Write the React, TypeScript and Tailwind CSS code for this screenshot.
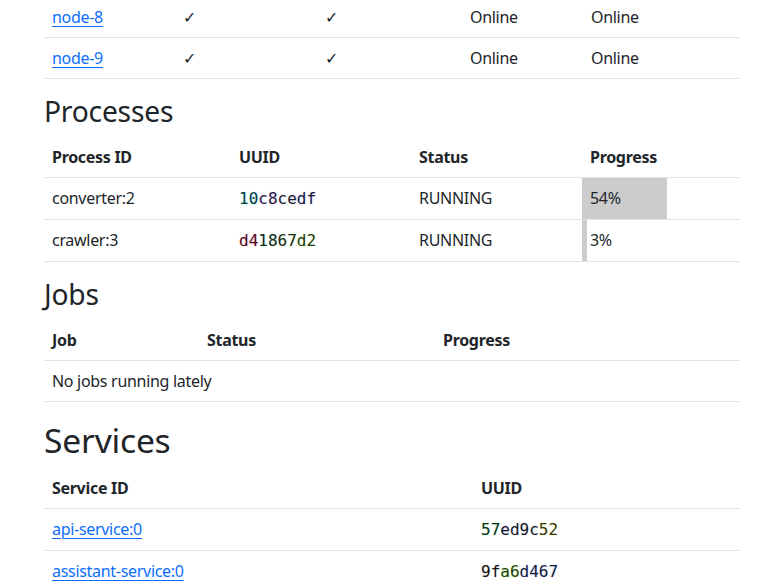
import React from "react";

const FONT = "font-['Noto_Sans',sans-serif]";
const MONO = "font-['DejaVu_Sans_Mono',monospace] tracking-normal";

type Seg = { t: string; c: string };

const uuids: Record<string, Seg[]> = {
  "10c8cedf": [
    { t: "10", c: "text-[#0a3a3c] [text-shadow:0_0_2px_#8ff5ff]" },
    { t: "c8", c: "text-[#2a1c3c] [text-shadow:0_0_2px_#dcc8ff]" },
    { t: "ce", c: "text-[#1c1c30] [text-shadow:0_0_2px_#d0d0e8]" },
    { t: "df", c: "text-[#16163a] [text-shadow:0_0_2px_#c8c8ff]" },
  ],
  d41867d2: [
    { t: "d4", c: "text-[#4a0f22] [text-shadow:0_0_2px_#ffb0c8]" },
    { t: "18", c: "text-[#10281a] [text-shadow:0_0_2px_#c8ecd4]" },
    { t: "67", c: "text-[#1a2a12] [text-shadow:0_0_2px_#d8f0c4]" },
    { t: "d2", c: "text-[#1e3a10] [text-shadow:0_0_2px_#ccffaa]" },
  ],
  "57ed9c52": [
    { t: "57", c: "text-[#0a3318] [text-shadow:0_0_2px_#b4f0c4]" },
    { t: "ed", c: "text-[#121a2a] [text-shadow:0_0_2px_#d0d4e4]" },
    { t: "9c", c: "text-[#121a2a] [text-shadow:0_0_2px_#d0d4e4]" },
    { t: "52", c: "text-[#33330f] [text-shadow:0_0_2px_#ffffa0]" },
  ],
  "9fa6d467": [
    { t: "9f", c: "text-[#121212] [text-shadow:0_0_2px_#dddddd]" },
    { t: "a6", c: "text-[#1f4010] [text-shadow:0_0_2px_#c4ff94]" },
    { t: "d4", c: "text-[#12203a] [text-shadow:0_0_2px_#c4d4ff]" },
    { t: "67", c: "text-[#12203a] [text-shadow:0_0_2px_#c4d4ff]" },
  ],
};

function Uuid({ id }: { id: string }) {
  return (
    <span className={MONO}>
      {uuids[id].map((s, i) => (
        <span key={i} className={s.c}>
          {s.t}
        </span>
      ))}
    </span>
  );
}

const td = "px-2 py-2 border-b border-[#dee2e6] align-top";
const th = "px-2 py-2 border-b border-[#dee2e6] text-left font-bold align-bottom";
const link = "text-[#0d6efd] underline underline-offset-[3px] decoration-1";

function H({ children, big }: { children: React.ReactNode; big?: boolean }) {
  return (
    <h2
      className={
        (big ? "text-[33.6px] pt-[2px]" : "text-[28.2px]") +
        " leading-[1.2] font-normal text-[#212529] mb-2 tracking-[-0.2px]"
      }
    >
      {children}
    </h2>
  );
}

export default function App() {
  return (
    <div className={`${FONT} text-[16px] leading-6 tracking-[-0.3px] text-[#212529] bg-white min-h-[587px] overflow-hidden`}>
      <div className="ml-[44px] w-[696px] -mt-[3px]">
        <table className="w-full border-collapse table-fixed mb-4">
          <colgroup>
            <col className="w-[131px]" />
            <col className="w-[142px]" />
            <col className="w-[145px]" />
            <col className="w-[121px]" />
            <col />
          </colgroup>
          <tbody>
            {["node-8", "node-9"].map((n) => (
              <tr key={n}>
                <td className={td}>
                  <a href="#" className={link}>
                    {n}
                  </a>
                </td>
                <td className={td}>✓</td>
                <td className={td}>✓</td>
                <td className={td}>Online</td>
                <td className={td}>Online</td>
              </tr>
            ))}
          </tbody>
        </table>

        <H>Processes</H>
        <table className="w-full border-collapse table-fixed mb-4">
          <colgroup>
            <col className="w-[187px]" />
            <col className="w-[180px]" />
            <col className="w-[171px]" />
            <col />
          </colgroup>
          <thead>
            <tr>
              <th className={th}>Process ID</th>
              <th className={th}>UUID</th>
              <th className={th}>Status</th>
              <th className={th}>Progress</th>
            </tr>
          </thead>
          <tbody>
            {[
              { p: "converter:2", u: "10c8cedf", pr: 54 },
              { p: "crawler:3", u: "d41867d2", pr: 3 },
            ].map((r) => (
              <tr key={r.p}>
                <td className={td}>{r.p}</td>
                <td className={td}>
                  <Uuid id={r.u} />
                </td>
                <td className={td}>RUNNING</td>
                <td
                  className={td}
                  style={{
                    background: `linear-gradient(to right, #cccccc ${r.pr}%, transparent ${r.pr}%)`,
                  }}
                >
                  {r.pr}%
                </td>
              </tr>
            ))}
          </tbody>
        </table>

        <H>Jobs</H>
        <table className="w-full border-collapse table-fixed mb-4">
          <colgroup>
            <col className="w-[155px]" />
            <col className="w-[236px]" />
            <col />
          </colgroup>
          <thead>
            <tr>
              <th className={th}>Job</th>
              <th className={th}>Status</th>
              <th className={th}>Progress</th>
            </tr>
          </thead>
          <tbody>
            <tr>
              <td className={td} colSpan={3}>
                No jobs running lately
              </td>
            </tr>
          </tbody>
        </table>

        <H big>Services</H>
        <table className="w-full border-collapse table-fixed mb-4">
          <colgroup>
            <col className="w-[429px]" />
            <col />
          </colgroup>
          <thead>
            <tr>
              <th className={th}>Service ID</th>
              <th className={th}>UUID</th>
            </tr>
          </thead>
          <tbody>
            {[
              { s: "api-service:0", u: "57ed9c52" },
              { s: "assistant-service:0", u: "9fa6d467" },
            ].map((r) => (
              <tr key={r.s}>
                <td className={td}>
                  <a href="#" className={link}>
                    {r.s}
                  </a>
                </td>
                <td className={td}>
                  <Uuid id={r.u} />
                </td>
              </tr>
            ))}
          </tbody>
        </table>
      </div>
    </div>
  );
}
